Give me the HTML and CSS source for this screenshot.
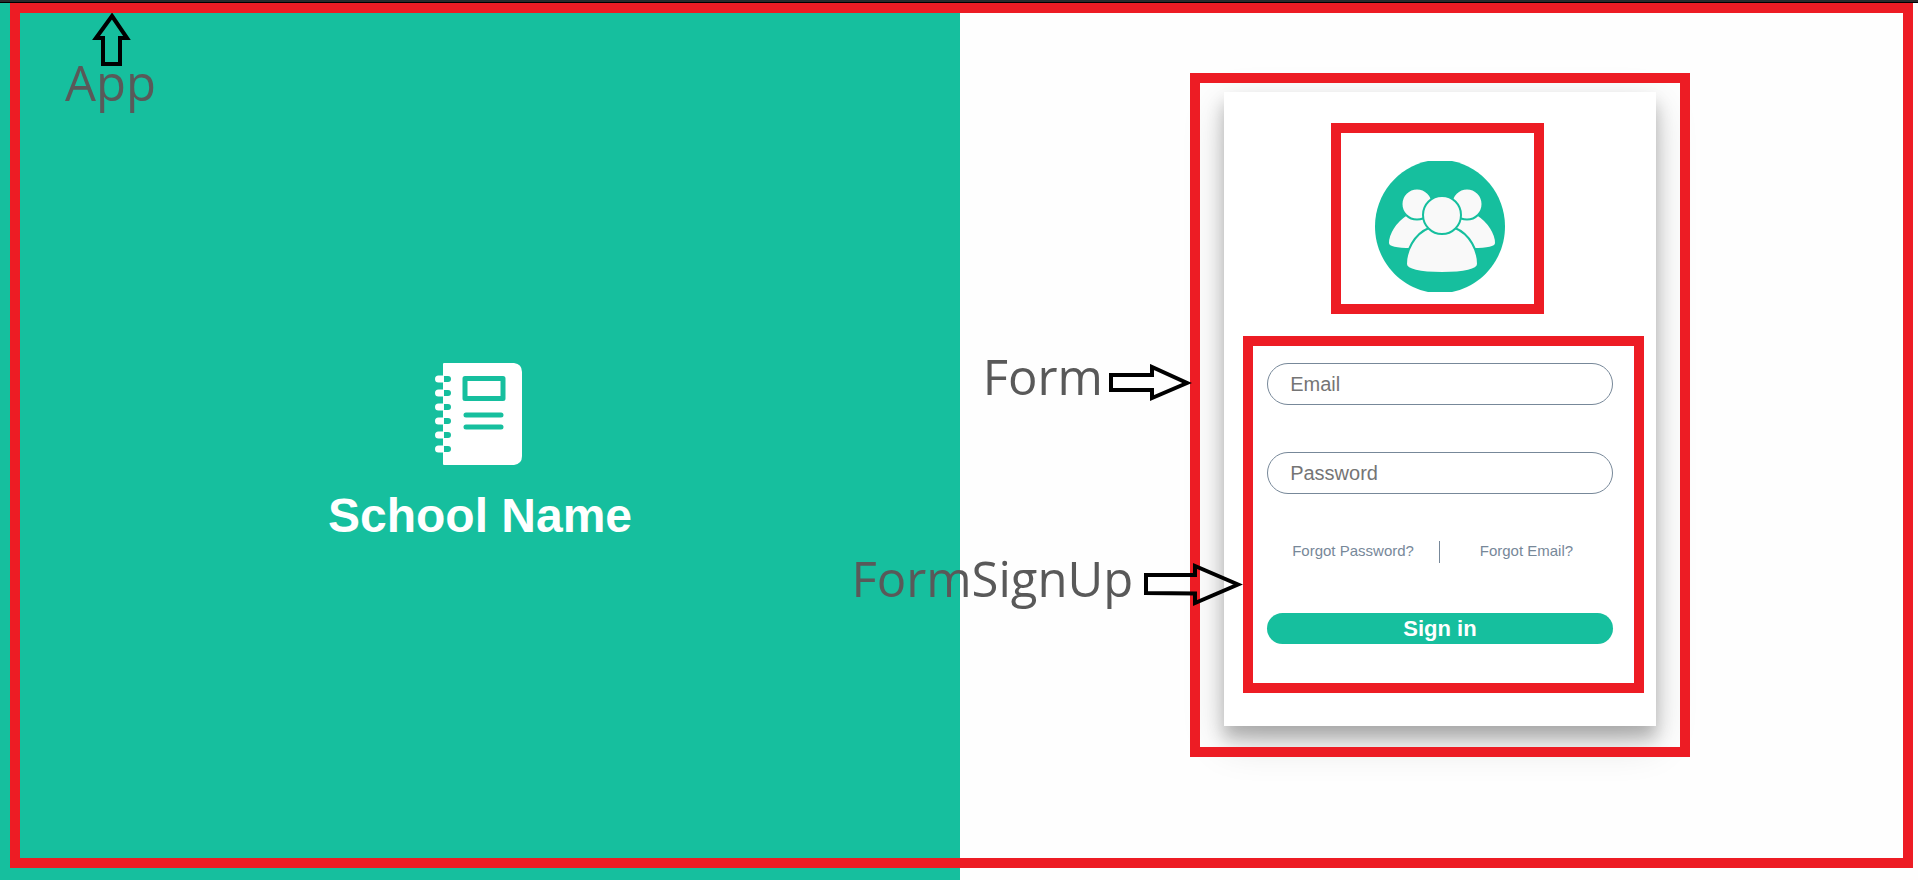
FILE: index.html
```html
<!DOCTYPE html>
<html lang="en">
<head>
<meta charset="utf-8">
<title>School Name - Sign in</title>
<link rel="stylesheet" href="styles.css">
</head>
<body>
<div class="topbar"></div>
<main class="app">
  <section class="brand">
    <svg class="brand-icon" viewBox="0 0 90 102" aria-hidden="true">
      <path fill="#fff" d="M9 0H79Q87 1 87 9V93Q87 101 79 102H9Q8 102 8 101V1Q8 0 9 0Z"/>
      <g fill="none" stroke="#16bf9e" stroke-width="5" stroke-linecap="round">
        <rect x="30" y="15.500" width="38" height="20" stroke-linejoin="round"/>
        <path d="M31 52H66M31 64H66"/>
      </g>
      <g stroke="#fff" stroke-width="7" stroke-linecap="round">
        <path d="M3.500 16H8M3.500 30H8M3.500 44H8M3.500 58H8M3.500 72H8M3.500 86H8"/>
      </g>
      <path fill="#16bf9e" d="M9 13h4q3 0 3 3t-3 3h-4zM9 27h4q3 0 3 3t-3 3h-4zM9 41h4q3 0 3 3t-3 3h-4zM9 55h4q3 0 3 3t-3 3h-4zM9 69h4q3 0 3 3t-3 3h-4zM9 83h4q3 0 3 3t-3 3h-4z"/>
    </svg>
    <h1 class="brand-name">School Name</h1>
  </section>

  <section class="login">
    <div class="card">
      <div class="frame frame-card"></div>
      <div class="avatar">
        <div class="frame frame-avatar"></div>
        <svg class="avatar-icon" viewBox="0 0 130 131" aria-hidden="true">
          <path fill="#16bf9e" d="M53 0H77C107 6 130 33 130 65.500S107 125 77 131H53C23 125 0 98 0 65.500S23 6 53 0Z"/>
          <g fill="#f9f9f9" stroke="#16bf9e" stroke-width="2">
            <path d="M31 54C20 61 13 73 13 82C13 87 27 88 36 88L62 88V54Z"/>
            <path d="M103 54C114 61 121 73 121 82C121 87 107 88 98 88L72 88V54Z"/>
            <circle cx="42" cy="43" r="15.500"/>
            <circle cx="92" cy="43" r="15.500"/>
            <path d="M54 67C39 73 31 90 31 103C31 109 45 112 67 112S103 109 103 103C103 90 95 73 80 67Z"/>
            <circle cx="67" cy="54" r="19"/>
          </g>
        </svg>
      </div>
      <form class="form">
        <div class="frame frame-form"></div>
        <input class="field" type="email" placeholder="Email" aria-label="Email">
        <input class="field" type="password" placeholder="Password" aria-label="Password">
        <div class="links">
          <a class="link" href="#">Forgot Password?</a>
          <a class="link" href="#">Forgot Email?</a>
        </div>
        <button class="submit" type="submit">Sign in</button>
        <div class="note note-signup">
          <span>FormSignUp</span>
          <svg class="arrow-signup" width="99" height="46" viewBox="0 0 99 46" aria-hidden="true"><path d="M2 13H51V4L94 22.500L51 41V31.500L2 31Z"/></svg>
        </div>
      </form>
      <div class="note note-form">
        <span>Form</span>
        <svg class="arrow-form" width="83" height="38" viewBox="0 0 83 38" aria-hidden="true"><path d="M2 11H43V3L78 19L43 34V26H2Z"/></svg>
      </div>
    </div>
  </section>

  <div class="frame frame-app"></div>
  <div class="note note-app">
    <svg class="arrow-app" width="42" height="54" viewBox="0 0 42 54" aria-hidden="true"><path d="M21 3L36 25H29V51H12V25H5Z"/></svg>
    <span>App</span>
  </div>
</main>
</body>
</html>
```

FILE: styles.css
```css
* {
  box-sizing: border-box;
}

body {
  margin: 0;
  min-height: 100vh;
  display: flex;
  flex-direction: column;
  background: #fefefe;
  font-family: "Liberation Sans", Arial, sans-serif;
}

.topbar {
  height: 3px;
  background: #2b2b2d;
  border-bottom: 1px solid #000;
}

.app {
  position: relative;
  flex: 1;
  display: grid;
  grid-template-columns: 960fr 958fr;
}

.brand {
  display: flex;
  flex-direction: column;
  align-items: center;
  justify-content: center;
  gap: 24px;
  padding-top: 22px;
  background: #16bf9e;
}

.brand-icon {
  width: 90px;
  height: 102px;
}

.brand-name {
  margin: 0;
  color: #fff;
  font-size: 48px;
  line-height: 54px;
}

.login {
  display: flex;
  justify-content: center;
  align-items: flex-start;
  padding: 89px 0 89px 2px;
}

.card {
  position: relative;
  width: 45.2%;
  display: flex;
  flex-direction: column;
  align-items: center;
  gap: 71px;
  padding: 69px 0 82px;
  background: #fff;
  box-shadow: 0 12px 16px rgba(0, 0, 0, 0.24), 0 15px 40px rgba(0, 0, 0, 0.16);
}

.avatar {
  position: relative;
}

.avatar-icon {
  display: block;
  width: 130px;
  height: 131px;
}

.form {
  position: relative;
  width: 80%;
  display: flex;
  flex-direction: column;
  gap: 47px;
}

.field {
  width: 100%;
  height: 42px;
  padding: 0 22px;
  border: 1px solid #778899;
  border-radius: 21px;
  background: #fff;
  color: #333;
  font: 20px "Liberation Sans", Arial, sans-serif;
}

.field::placeholder {
  color: #757575;
}

.links {
  display: grid;
  grid-template-columns: 1fr 1fr;
}

.link {
  height: 22px;
  color: #778899;
  font-size: 15px;
  line-height: 20px;
  text-align: center;
  text-decoration: none;
}

.link:first-child {
  border-right: 1px solid #778899;
}

.submit {
  height: 31px;
  margin-top: 3px;
  padding: 0;
  border: 0;
  border-radius: 16px;
  background: #16bf9e;
  color: #fff;
  font: bold 22px "Liberation Sans", Arial, sans-serif;
}

/* Component outlines drawn over the page */
.frame {
  position: absolute;
  border: 10px solid #ed1c24;
  pointer-events: none;
}

.frame-app {
  inset: 0 5px 12px 10px;
}

.frame-card {
  inset: -19px -34px -31px;
}

.frame-avatar {
  inset: -38px -39px -22px -44px;
}

.frame-form {
  inset: -27px -31px -49px -24px;
}

/* Component names with arrows */
.note {
  position: absolute;
  display: flex;
  color: #595959;
  font: 49px/50px "Open Sans", "Noto Sans", sans-serif;
  pointer-events: none;
}

.note path {
  fill: none;
  stroke: #000;
  stroke-width: 4;
}

.note-app {
  top: 10px;
  left: 65px;
  flex-direction: column;
  align-items: center;
}

.arrow-app {
  margin: 0 0 -10px 3px;
}

.note-form {
  top: 259px;
  right: calc(100% + 32px);
  gap: 6px;
}

.arrow-form {
  margin-top: 13px;
}

.note-signup {
  top: 190px;
  right: calc(100% + 24px);
  gap: 11px;
}

.arrow-signup {
  margin-top: 9px;
}
```
